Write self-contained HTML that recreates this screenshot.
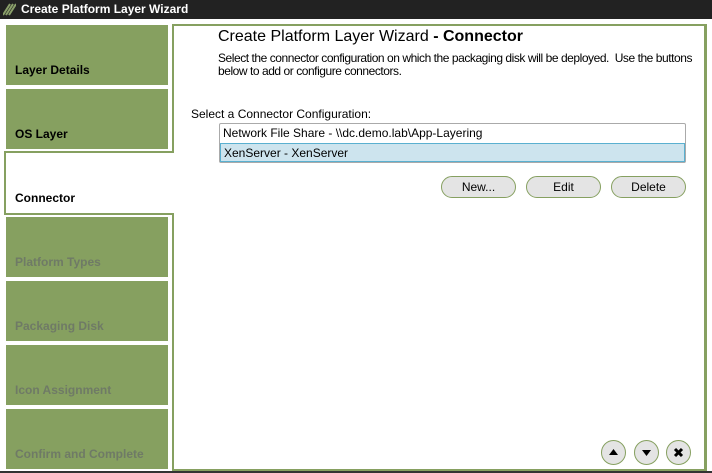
<!DOCTYPE html>
<html><head><style>
*{margin:0;padding:0;box-sizing:border-box}
body{width:712px;height:473px;background:#fff;font-family:"Liberation Sans",Arial,sans-serif;position:relative;overflow:hidden;font-size:12px;color:#000}
.title{position:absolute;left:0;top:0;width:712px;height:19px;background:#222;color:#fff;font-size:12px;font-weight:bold;line-height:19px;padding-left:21px}
.tab{position:absolute;left:6px;width:162px;height:60px;background:#86a060;font-weight:bold;font-size:12px;padding:38px 0 0 9px}
.dis{color:#6f7a66}
.main{position:absolute;left:172px;top:24px;width:535px;height:447px;border:2px solid #86a060;border-right-width:3px}
.act{position:absolute;left:4px;top:151px;width:170px;height:64px;background:#fff;border:2px solid #86a060;border-right:none;font-weight:bold;padding:38px 0 0 9px;z-index:2}
.btn{position:absolute;top:176px;width:75px;height:22px;border:1px solid #86a060;border-radius:11px;background:#e4e4e4;text-align:center;line-height:20px;font-size:12px}
.circ{position:absolute;top:440px;width:25px;height:25px;border:1px solid #86a060;border-radius:50%;background:#e4e4e4}
</style></head><body>
<div class="title"><svg style="position:absolute;left:3px;top:3px" width="13" height="13"><path d="M0 12L7 1M3 12L10 1M6 12L13 1" stroke="#8aa06a" stroke-width="2"/></svg>Create Platform Layer Wizard</div>
<div class="main"></div>
<div class="tab" style="top:25px">Layer Details</div>
<div class="tab" style="top:89px">OS Layer</div>
<div class="act">Connector</div>
<div class="tab dis" style="top:217px">Platform Types</div>
<div class="tab dis" style="top:281px">Packaging Disk</div>
<div class="tab dis" style="top:345px">Icon Assignment</div>
<div class="tab dis" style="top:409px">Confirm and Complete</div>
<div style="position:absolute;left:218px;top:28px;font-size:16px">Create Platform Layer Wizard <b>- Connector</b></div>
<div style="position:absolute;left:218px;top:52px;width:480px;line-height:13px;white-space:nowrap;letter-spacing:-0.45px">Select the connector configuration on which the packaging disk will be deployed.&nbsp; Use the buttons<br>below to add or configure connectors.</div>
<div style="position:absolute;left:191px;top:107px">Select a Connector Configuration:</div>
<div style="position:absolute;left:219px;top:123px;width:467px;height:40px;border:1px solid #aaa;border-radius:2px">
<div style="height:19px;line-height:18px;padding-left:3px">Network File Share - \\dc.demo.lab\App-Layering</div>
<div style="height:19px;line-height:18px;padding-left:3px;background:#cde4ee;border:1px solid #5ab0d0">XenServer - XenServer</div></div>
<div class="btn" style="left:441px">New...</div>
<div class="btn" style="left:526px">Edit</div>
<div class="btn" style="left:611px">Delete</div>
<div class="circ" style="left:601px"><svg width="23" height="23"><path d="M7 14L11.5 8L16 14Z" fill="#000"/></svg></div>
<div class="circ" style="left:634px"><svg width="23" height="23"><path d="M7 9L11.5 15L16 9Z" fill="#000"/></svg></div>
<div class="circ" style="left:666px"><svg width="23" height="23"><path d="M8 8L15 15M15 8L8 15" stroke="#000" stroke-width="3"/></svg></div>
<div style="position:absolute;left:0;top:471px;width:712px;height:2px;background:#333"></div>
</body></html>
